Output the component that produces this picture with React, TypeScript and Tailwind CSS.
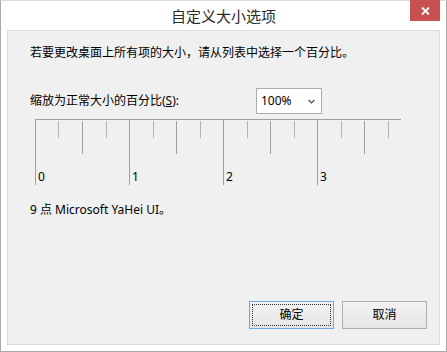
import React from 'react'

const font = { fontFamily: '"Noto Sans", "Noto Sans CJK SC", sans-serif' }

function Ruler() {
    const majors = [0, 94, 188, 282]
    const mediums = [47, 141, 235, 329]
    const smalls = [23, 71, 118, 165, 212, 259, 306, 353]

    return (
        <svg width="367" height="67" className="ml-[5px] mt-[5px] block" style={font}>
            <line x1="0" y1="0.5" x2="366" y2="0.5" stroke="#a0a0a0" />
            {majors.map(x => <line key={'M' + x} x1={x + 0.5} y1="0" x2={x + 0.5} y2="66" stroke="#a0a0a0" />)}
            {mediums.map(x => <line key={'m' + x} x1={x + 0.5} y1="2" x2={x + 0.5} y2="35" stroke="#a0a0a0" />)}
            {smalls.map(x => <line key={'s' + x} x1={x + 0.5} y1="2" x2={x + 0.5} y2="19" stroke="#b4b4b4" />)}
            {majors.map((x, i) => (
                <text key={'t' + x} x={x + 3} y="62" fontSize="12" fill="#000">{i}</text>
            ))}
        </svg>
    )
}

function Button({ label, isDefault }: { label: string, isDefault?: boolean }) {
    return (
        <button
            className={isDefault
                ? 'relative w-[85px] h-[28px] border border-[#6ea7e3] bg-gradient-to-b from-[#f3f3f3] to-[#e6e6e6] text-[12px] text-black flex items-center justify-center'
                : 'relative w-[85px] h-[28px] border border-[#adadad] bg-gradient-to-b from-[#f3f3f3] to-[#e6e6e6] text-[12px] text-black flex items-center justify-center'}
            style={font}>
            {isDefault && <span className="absolute inset-[2px] border border-dotted border-[#333]" />}
            <span className="leading-[16px]">{label}</span>
        </button>
    )
}

export default function App() {
    return (
        <div className="w-[447px] h-[352px] bg-white border border-[#a9a9a9] border-t-[#dcdcdc] flex flex-col" style={font}>

            <div className="relative h-[29px] flex items-center justify-center shrink-0">
                <span className="text-[15px] leading-[20px] text-[#2b2b2b]">自定义大小选项</span>
                <div className="absolute top-[-1px] right-[6px] w-[30px] h-[21px] bg-[#c75050] flex items-center justify-center">
                    <svg width="9" height="8" viewBox="0 0 9 8">
                        <path d="M1 0.5 L8 7.5 M8 0.5 L1 7.5" stroke="#fff" strokeWidth="1.8" />
                    </svg>
                </div>
            </div>

            <div className="mx-[6px] h-[315px] border border-[#dadada] bg-[#f0f0f0] flex flex-col pl-[22px] pt-[14px] text-[12px] text-black">

                <p className="leading-[16px]">若要更改桌面上所有项的大小，请从列表中选择一个百分比。</p>

                <div className="flex items-center mt-[27px] h-[26px]">
                    <span className="w-[226px] leading-[16px]">缩放为正常大小的百分比(<span className="underline">S</span>):</span>
                    <div className="w-[66px] h-[26px] bg-white border border-[#acacac] flex items-center justify-between pl-[4px] pr-[6px]">
                        <span className="leading-[16px]">100%</span>
                        <svg width="7" height="5" viewBox="0 0 7 5">
                            <path d="M0.5 0.8 L3.5 3.8 L6.5 0.8" fill="none" stroke="#444" strokeWidth="1.2" />
                        </svg>
                    </div>
                </div>

                <Ruler />

                <p className="leading-[16px] mt-[16px]">9 点 Microsoft YaHei UI。</p>

                <div className="mt-auto flex justify-end gap-[8px] pr-[12px] pb-[15px]">
                    <Button label="确定" isDefault />
                    <Button label="取消" />
                </div>
            </div>
        </div>
    )
}
